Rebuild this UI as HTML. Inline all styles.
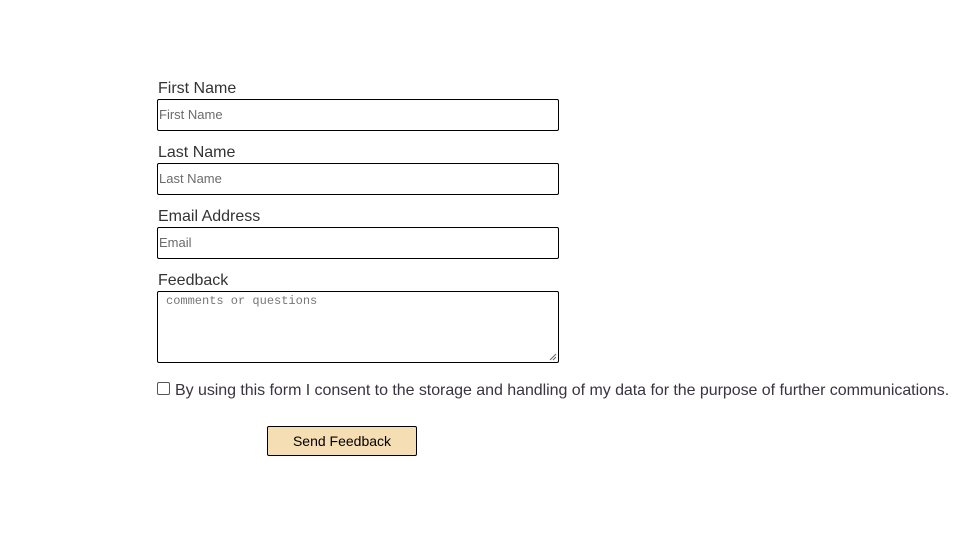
<!DOCTYPE html>
<html><head><meta charset="utf-8"><style>
body{margin:0;background:#fff;width:976px;height:543px;position:relative;font-family:"Liberation Sans",sans-serif;color:#333;overflow:hidden}
.l{position:absolute;left:158px;font-size:16px;line-height:18px}
.i{position:absolute;left:157px;width:402px;height:32px;border:1px solid #000;border-radius:2px;font-size:13px;color:#6b6b6b;line-height:30px;padding-left:1px;box-sizing:border-box}
.ta{position:absolute;left:157px;top:291px;border:1px solid #000;border-radius:2px;font-family:"Liberation Mono",monospace;font-size:12px;color:#777;padding:2px 0 0 8px;box-sizing:border-box;width:402px;height:72px}
.cb{position:absolute;left:157px;top:382px;width:11px;height:11px;border:1px solid #555;border-radius:2px}
.ct{position:absolute;left:175px;top:382px;font-size:16px;letter-spacing:-0.045px;line-height:18px;color:#3a3340;white-space:nowrap}
.b{position:absolute;left:267px;top:426px;width:148px;height:28px;border:1px solid #000;border-radius:2px;background:#f5deb3;font-size:14px;color:#000;text-align:center;line-height:28px}
</style></head><body>
<div class="l" style="top:80px">First Name</div>
<div class="i" style="top:99px">First Name</div>
<div class="l" style="top:144px">Last Name</div>
<div class="i" style="top:163px">Last Name</div>
<div class="l" style="top:208px">Email Address</div>
<div class="i" style="top:227px">Email</div>
<div class="l" style="top:272px">Feedback</div>
<div class="ta">comments or questions
<svg style="position:absolute;right:1px;bottom:1px" width="8" height="8"><path d="M7 1L1 7M7 4L4 7" stroke="#666" stroke-width="1"/></svg></div>
<div class="cb"></div>
<div class="ct">By using this form I consent to the storage and handling of my data for the purpose of further communications.</div>
<div class="b">Send Feedback</div>
</body></html>
